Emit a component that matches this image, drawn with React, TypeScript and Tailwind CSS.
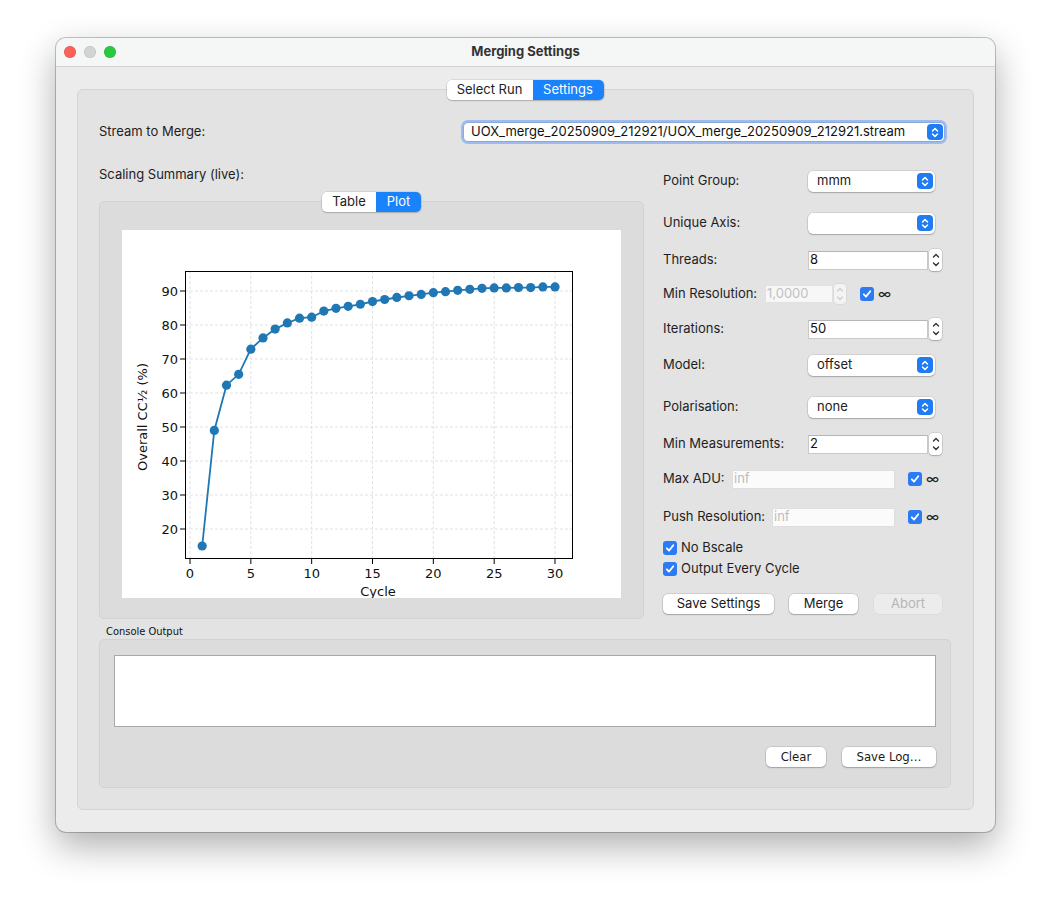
import React from "react";

const UI = "font-['Inter','Liberation_Sans',sans-serif]";
const NARROW = "font-['Liberation_Sans_Narrow','DejaVu_Sans_Condensed','Liberation_Sans',sans-serif]";

const CC_HALF = [
  15, 49, 62.3, 65.5, 72.9, 76.2, 78.8, 80.6, 82, 82.3, 84.1, 84.9, 85.5, 86.1, 86.9, 87.5, 88.1,
  88.6, 89, 89.5, 89.8, 90.2, 90.5, 90.8, 90.9, 90.9, 91, 91, 91.2, 91.2,
];

const px = (v: number) => 68 + v * 12.167;
const py = (v: number) => 61 + (90 - v) * 3.4;

function BlueStepper() {
  return (
    <div className="w-[16px] h-[16px] rounded-[4px] bg-[#1f7cf4] flex items-center justify-center">
      <svg width="8" height="11" viewBox="0 0 8 11" fill="none" stroke="white" strokeWidth="1.5" strokeLinecap="round" strokeLinejoin="round">
        <path d="M1.5 4 L4 1.5 L6.5 4" />
        <path d="M1.5 7 L4 9.5 L6.5 7" />
      </svg>
    </div>
  );
}

function Combo({ value }: { value: string }) {
  return (
    <div className="h-[21px] w-[127px] bg-white rounded-[5px] shadow-[0_0_0_0.5px_rgba(0,0,0,0.15),0_1px_1.5px_rgba(0,0,0,0.22)] flex items-center pl-[9px] pr-[2px]">
      <span className="flex-1 text-[13px] text-[#222]">{value}</span>
      <BlueStepper />
    </div>
  );
}

function SpinArrows({ faded }: { faded?: boolean }) {
  return (
    <div
      className={
        faded
          ? "w-[12px] h-[20px] rounded-[4px] bg-[#f4f4f4] shadow-[0_0_0_0.5px_rgba(0,0,0,0.08)] flex items-center justify-center"
          : "w-[13px] h-[22px] rounded-[4px] bg-white shadow-[0_0_0_0.5px_rgba(0,0,0,0.15),0_1px_1.5px_rgba(0,0,0,0.2)] flex items-center justify-center"
      }
    >
      <svg width="8" height="16" viewBox="0 0 8 16" fill="none" stroke={faded ? "#cfcfcf" : "#333"} strokeWidth="1.4" strokeLinecap="round" strokeLinejoin="round">
        <path d="M1.5 5 L4 2.5 L6.5 5" />
        <path d="M1.5 11 L4 13.5 L6.5 11" />
      </svg>
    </div>
  );
}

function Spin({ value }: { value: string }) {
  return (
    <div className="flex items-center">
      <div className="h-[19px] w-[120px] bg-white border border-[#c9c9c9] border-t-[#b5b5b5] flex items-center pl-[1px] text-[13px] text-[#111]">
        {value}
      </div>
      <div className="ml-[1px]">
        <SpinArrows />
      </div>
    </div>
  );
}

function Check() {
  return (
    <div className="w-[14px] h-[14px] rounded-[3px] bg-[#2b7bf5] flex items-center justify-center shrink-0">
      <svg width="10" height="10" viewBox="0 0 10 10" fill="none" stroke="white" strokeWidth="1.8" strokeLinecap="round" strokeLinejoin="round">
        <path d="M1.8 5.3 L4 7.6 L8.3 2.3" />
      </svg>
    </div>
  );
}

function Infinity_() {
  return <span className="ml-[4px] text-[14px] text-[#222] leading-none">∞</span>;
}

function Button({ label, w, disabled }: { label: string; w: string; disabled?: boolean }) {
  return (
    <div
      className={
        disabled
          ? `${w} h-[20px] rounded-[5px] bg-[#ececec] shadow-[0_0_0_0.5px_rgba(0,0,0,0.06)] flex items-center justify-center text-[13px] text-[#b5b5b5]`
          : `${w} h-[20px] rounded-[5px] bg-white shadow-[0_0_0_0.5px_rgba(0,0,0,0.18),0_1px_1.5px_rgba(0,0,0,0.2)] flex items-center justify-center text-[13px] text-[#1a1a1a]`
      }
    >
      {label}
    </div>
  );
}

function Segmented({ left, right, lw, rw }: { left: string; right: string; lw: string; rw: string }) {
  return (
    <div className="flex h-[20px] rounded-[5px] shadow-[0_0_0_0.5px_rgba(0,0,0,0.15),0_1px_1.5px_rgba(0,0,0,0.18)] overflow-hidden">
      <div className={`${lw} bg-white flex items-center justify-center text-[13px] text-[#222]`}>{left}</div>
      <div className={`${rw} bg-[#1a82fb] flex items-center justify-center text-[13px] text-white`}>{right}</div>
    </div>
  );
}

function Plot() {
  const xt = [0, 5, 10, 15, 20, 25, 30];
  const yt = [20, 30, 40, 50, 60, 70, 80, 90];
  const pts = CC_HALF.map((v, i) => `${px(i + 1).toFixed(1)},${py(v).toFixed(1)}`).join(" ");
  return (
    <svg width="499" height="368" viewBox="0 0 499 368" className="block bg-white" style={{ fontFamily: "'DejaVu Sans', sans-serif" }}>
      {xt.map((t) => (
        <line key={"gx" + t} x1={px(t)} x2={px(t)} y1={41} y2={328} stroke="#dadada" strokeWidth="0.8" strokeDasharray="3 2" />
      ))}
      {yt.map((t) => (
        <line key={"gy" + t} x1={63} x2={450} y1={py(t)} y2={py(t)} stroke="#dadada" strokeWidth="0.8" strokeDasharray="3 2" />
      ))}
      <polyline points={pts} fill="none" stroke="#1f77b4" strokeWidth="1.8" />
      {CC_HALF.map((v, i) => (
        <circle key={i} cx={px(i + 1)} cy={py(v)} r="4.6" fill="#1f77b4" />
      ))}
      <rect x="63.5" y="41.5" width="387" height="287" fill="none" stroke="#000" strokeWidth="1" />
      {xt.map((t) => (
        <g key={"tx" + t}>
          <line x1={px(t)} x2={px(t)} y1={329} y2={334} stroke="#000" strokeWidth="1" />
          <text x={px(t)} y={348} textAnchor="middle" fontSize="13" fill="#111">
            {t}
          </text>
        </g>
      ))}
      {yt.map((t) => (
        <g key={"ty" + t}>
          <line x1={58} x2={63} y1={py(t)} y2={py(t)} stroke="#000" strokeWidth="1" />
          <text x={56} y={py(t) + 5} textAnchor="end" fontSize="13" fill="#111">
            {t}
          </text>
        </g>
      ))}
      <text x="256" y="366" textAnchor="middle" fontSize="13" fill="#111">
        Cycle
      </text>
      <text transform="translate(25 187) rotate(-90)" textAnchor="middle" fontSize="13" fill="#111">
        Overall CC½ (%)
      </text>
    </svg>
  );
}

function Row({ h, children }: { h: string; children: React.ReactNode }) {
  return <div className={`${h} flex items-center`}>{children}</div>;
}

export default function App() {
  return (
    <div className={`w-[1051px] h-[906px] bg-white pt-[38px] pl-[56px] ${UI} text-[13px] text-[#1e1e1e]`}>
      <div className="w-[939px] rounded-[10px] overflow-hidden bg-[#ececec] shadow-[0_0_0_1px_rgba(0,0,0,0.22),0_14px_36px_rgba(0,0,0,0.32)]">
        {/* title bar */}
        <div className="h-[29px] bg-[#f5f7f6] border-b border-[#d3d3d3] flex items-center">
          <div className="flex items-center gap-[8px] pl-[8px]">
            <div className="w-[12px] h-[12px] rounded-full bg-[#fe5f57] shadow-[inset_0_0_0_0.5px_rgba(0,0,0,0.15)]" />
            <div className="w-[12px] h-[12px] rounded-full bg-[#d1d3d4] shadow-[inset_0_0_0_0.5px_rgba(0,0,0,0.12)]" />
            <div className="w-[12px] h-[12px] rounded-full bg-[#28c840] shadow-[inset_0_0_0_0.5px_rgba(0,0,0,0.15)]" />
          </div>
          <div className="flex-1 text-center font-bold text-[13px] text-[#333] -ml-[60px]">Merging Settings</div>
        </div>

        {/* body */}
        <div className="px-[21px] pt-[22px] pb-[22px]">
          <div className="bg-[#e3e3e3] border border-[#d4d4d4] rounded-[6px] pl-[21px] pr-[27px] pb-[21px]">
            <div className="flex justify-center -mt-[10px] pl-[5px]">
              <Segmented left="Select Run" right="Settings" lw="w-[86px]" rw="w-[71px]" />
            </div>

            <div className="mt-[20px] h-[24px] flex items-center">
              <div className="flex-1">Stream to Merge:</div>
              <div className="w-[486px] -mr-[1px] h-[24px] rounded-[7px] bg-[#9dbbef] p-[3px]">
                <div className="h-[18px] bg-white rounded-[4px] flex items-center pl-[7px] pr-[1px] shadow-[0_0_0_0.5px_rgba(0,0,0,0.2)]">
                  <span className="flex-1 text-[13px] text-[#111]">UOX_merge_20250909_212921/UOX_merge_20250909_212921.stream</span>
                  <BlueStepper />
                </div>
              </div>
            </div>

            <div className="mt-[16px] flex">
              {/* left column */}
              <div className="w-[545px]">
                <div className="mt-[4px] h-[20px] leading-[20px]">Scaling Summary (live):</div>
                <div className="mt-[17px] h-[418px] bg-[#dcdcdc] border border-[#d2d2d2] rounded-[5px]">
                  <div className="flex justify-center -mt-[10px]">
                    <Segmented left="Table" right="Plot" lw="w-[54px]" rw="w-[45px]" />
                  </div>
                  <div className="mt-[18px] ml-[22px]">
                    <Plot />
                  </div>
                </div>
              </div>

              {/* right column */}
              <div className="ml-[19px] w-[283px]">
                <Row h="h-[42px]">
                  <div className="w-[145px]">Point Group:</div>
                  <Combo value="mmm" />
                </Row>
                <Row h="h-[42px]">
                  <div className="w-[145px]">Unique Axis:</div>
                  <Combo value="" />
                </Row>
                <Row h="h-[32px]">
                  <div className="w-[145px]">Threads:</div>
                  <Spin value="8" />
                </Row>
                <Row h="h-[36px]">
                  <div className="w-[102px]">Min Resolution:</div>
                  <div className="h-[18px] w-[68px] bg-[#f7f7f7] border border-[#e2e2e2] flex items-center pl-[1px] text-[13px] text-[#c2c2c2]">
                    1,0000
                  </div>
                  <div className="ml-[1px]">
                    <SpinArrows faded />
                  </div>
                  <div className="ml-[14px] flex items-center">
                    <Check />
                    <Infinity_ />
                  </div>
                </Row>
                <Row h="h-[34px]">
                  <div className="w-[145px]">Iterations:</div>
                  <Spin value="50" />
                </Row>
                <Row h="h-[38px]">
                  <div className="w-[145px]">Model:</div>
                  <Combo value="offset" />
                </Row>
                <Row h="h-[46px]">
                  <div className="w-[145px]">Polarisation:</div>
                  <Combo value="none" />
                </Row>
                <Row h="h-[28px]">
                  <div className="w-[145px]">Min Measurements:</div>
                  <Spin value="2" />
                </Row>
                <Row h="h-[42px]">
                  <div className="w-[69px]">Max ADU:</div>
                  <div className="h-[19px] w-[163px] bg-[#fbfbfb] border border-[#dedede] flex items-center pl-[1px] text-[13px] text-[#bdbdbd]">
                    inf
                  </div>
                  <div className="ml-[13px] flex items-center">
                    <Check />
                    <Infinity_ />
                  </div>
                </Row>
                <Row h="h-[34px]">
                  <div className="w-[109px]">Push Resolution:</div>
                  <div className="h-[19px] w-[123px] bg-[#fbfbfb] border border-[#dedede] flex items-center pl-[1px] text-[13px] text-[#bdbdbd]">
                    inf
                  </div>
                  <div className="ml-[13px] flex items-center">
                    <Check />
                    <Infinity_ />
                  </div>
                </Row>
                <Row h="h-[28px]">
                  <Check />
                  <span className="ml-[4px]">No Bscale</span>
                </Row>
                <Row h="h-[14px]">
                  <Check />
                  <span className="ml-[4px]">Output Every Cycle</span>
                </Row>
                <div className="mt-[18px] flex items-center">
                  <Button label="Save Settings" w="w-[111px]" />
                  <div className="ml-[15px]">
                    <Button label="Merge" w="w-[69px]" />
                  </div>
                  <div className="ml-[16px]">
                    <Button label="Abort" w="w-[68px]" disabled />
                  </div>
                </div>
              </div>
            </div>

            {/* console */}
            <div className={`mt-[6px] h-[14px] leading-[14px] pl-[7px] text-[11px] text-[#111] ${NARROW}`}>Console Output</div>
            <div className="w-[852px] bg-[#dcdcdc] border border-[#d2d2d2] rounded-[5px] pt-[15px] pb-[20px] pl-[14px]">
              <div className="w-[822px] h-[72px] bg-white border border-[#a8a8a8]" />
              <div className={`w-[822px] mt-[20px] flex justify-end gap-[16px] ${NARROW}`}>
                <div className="w-[60px] h-[20px] rounded-[5px] bg-white shadow-[0_0_0_0.5px_rgba(0,0,0,0.18),0_1px_1.5px_rgba(0,0,0,0.2)] flex items-center justify-center text-[13px] text-[#1a1a1a]">
                  Clear
                </div>
                <div className="w-[94px] h-[20px] rounded-[5px] bg-white shadow-[0_0_0_0.5px_rgba(0,0,0,0.18),0_1px_1.5px_rgba(0,0,0,0.2)] flex items-center justify-center text-[13px] text-[#1a1a1a]">
                  Save Log…
                </div>
              </div>
            </div>
          </div>
        </div>
      </div>
    </div>
  );
}
